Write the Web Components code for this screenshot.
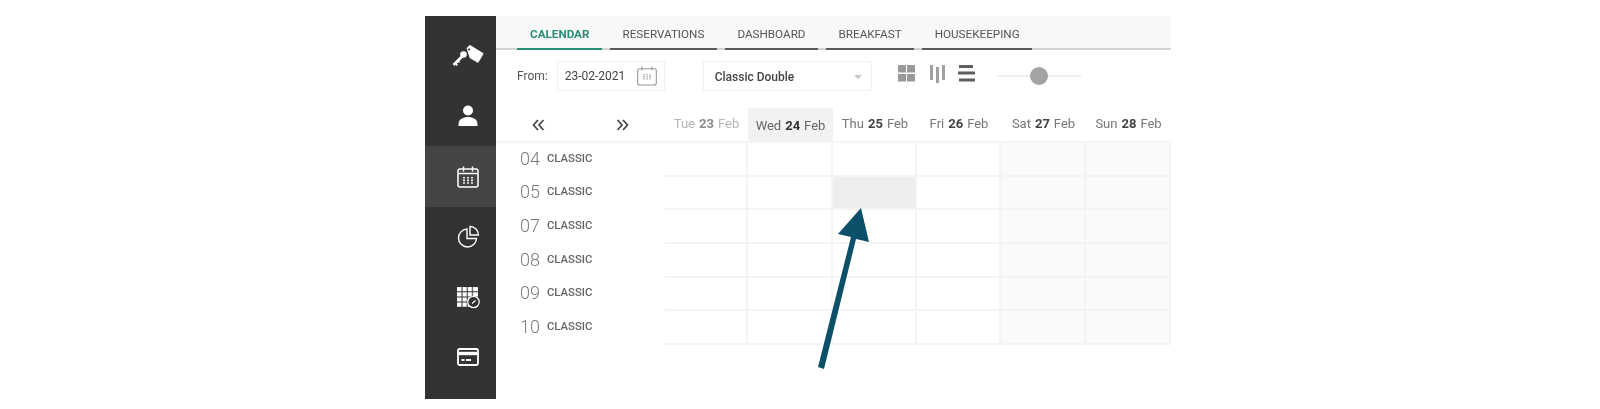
<!DOCTYPE html>
<html>
<head>
<meta charset="utf-8">
<title>Calendar</title>
<style>
  html, body { margin: 0; background: #fff; }
  body { font-family: Roboto, "Liberation Sans", sans-serif; }
</style>
</head>
<body>
<hotel-app>
  <side-rail slot="rail">
    <rail-item>
      <svg width="34" height="28" viewBox="0 0 34 28"><path d="M16.500 6.500L19 4l12.500 7.800-4.700 8-7.300-4.300z" fill="#fff" stroke="#fff" stroke-width="1.800" stroke-linejoin="round"/><circle cx="18" cy="7.500" r="1.100" fill="#333"/><path d="M2.500 23L11 14.500" stroke="#fff" stroke-width="2.800"/><circle cx="12.500" cy="12.500" r="3.300" fill="#fff"/><path d="M4.500 21.500l2 2M7 19l1.500 1.500" stroke="#fff" stroke-width="1.700"/></svg>
    </rail-item>
    <rail-item>
      <svg width="20" height="22" viewBox="0 0 20 22"><circle cx="10" cy="5.500" r="5" fill="#fff"/><path d="M0.500 21v-2c0-5 5-7 9.500-7s9.500 2 9.500 7v2z" fill="#fff"/></svg>
    </rail-item>
    <rail-item active>
      <svg width="22" height="24" viewBox="0 0 22 24" fill="none" stroke="#fff"><rect x="1" y="4" width="20" height="18" rx="2" stroke-width="1.500"/><path d="M1 8.500h20M6.500 1.500v5M15.500 1.500v5" stroke-width="1.400"/><path d="M7 12v7M11 12v7M15 12v7" stroke-width="1.800" stroke-dasharray="1.600 1"/></svg>
    </rail-item>
    <rail-item>
      <svg width="24" height="24" viewBox="0 0 24 24" fill="none" stroke="#fff" stroke-width="1.400"><path d="M11 4a9 9 0 1 0 9.500 9.500H11z"/><path d="M14 1.500a8.500 8.500 0 0 1 8.500 8.500H14z"/></svg>
    </rail-item>
    <rail-item>
      <svg width="24" height="24" viewBox="0 0 24 24"><path d="M1 2h21v4.200H1zM1 7.200h21v4.200H1zM1 12.400h21v4.200H1zM1 17.600h21v4.200H1z" fill="#fff"/><path d="M5.800 2v20M6.300 2v20M11 2v20M11.500 2v20M16.200 2v20M16.700 2v20" stroke="#333" stroke-width=".6"/><circle cx="17.500" cy="17" r="5.700" fill="#333" stroke="#fff" stroke-width="1.200"/><path d="M16 18.500l3.500-3" stroke="#fff" stroke-width="1.100"/></svg>
    </rail-item>
    <rail-item>
      <svg width="22" height="18" viewBox="0 0 22 18"><rect x="1" y="1" width="20" height="16" rx="1.500" fill="none" stroke="#fff" stroke-width="1.800"/><path d="M1 5.500h20" stroke="#fff" stroke-width="3.400"/><path d="M4.500 12h3M9 12h5" stroke="#fff" stroke-width="2"/></svg>
    </rail-item>
  </side-rail>

  <tab-bar slot="tabs">
    <tab-item active>CALENDAR</tab-item>
    <tab-item>RESERVATIONS</tab-item>
    <tab-item>DASHBOARD</tab-item>
    <tab-item>BREAKFAST</tab-item>
    <tab-item>HOUSEKEEPING</tab-item>
  </tab-bar>

  <tool-bar slot="tools">
    <date-field label="From:" value="23-02-2021"></date-field>
    <room-select value="Classic Double"></room-select>
    <view-switch></view-switch>
    <zoom-slider></zoom-slider>
  </tool-bar>

  <cal-grid slot="grid">
    <cal-head>
      <day-head dim name="Tue" num="23"></day-head>
      <day-head current name="Wed" num="24"></day-head>
      <day-head name="Thu" num="25"></day-head>
      <day-head name="Fri" num="26"></day-head>
      <day-head name="Sat" num="27"></day-head>
      <day-head name="Sun" num="28"></day-head>
    </cal-head>
    <room-row num="04" type="CLASSIC" h="34"></room-row>
    <room-row num="05" type="CLASSIC" h="33" selected="2"></room-row>
    <room-row num="07" type="CLASSIC" h="34"></room-row>
    <room-row num="08" type="CLASSIC" h="34"></room-row>
    <room-row num="09" type="CLASSIC" h="33"></room-row>
    <room-row num="10" type="CLASSIC" h="34"></room-row>
  </cal-grid>
</hotel-app>

<script>
const COLS = '169px 83px 85px 84px 84px 85px 85px';

class HotelApp extends HTMLElement {
  constructor() {
    super();
    this.attachShadow({ mode: 'open' }).innerHTML = `
    <style>
      :host { display: block; height: 409px; box-sizing: border-box; padding: 16px 0 10px 425px; position: relative; overflow: hidden; }
      .frame { display: flex; width: 746px; height: 383px; filter: blur(.35px); }
      .main { flex: 1; min-width: 0; display: flex; flex-direction: column; }
      svg { position: absolute; left: 810px; top: 200px; }
    </style>
    <div class="frame">
      <slot name="rail"></slot>
      <div class="main">
        <slot name="tabs"></slot>
        <slot name="tools"></slot>
        <slot name="grid"></slot>
      </div>
    </div>
    <svg width="70" height="175" viewBox="0 0 70 175">
      <path d="M51 8L28 34l13 3L8 167l6 2L46 39l13 3z" fill="#0b4f68"/>
    </svg>`;
  }
}

class SideRail extends HTMLElement {
  constructor() {
    super();
    this.attachShadow({ mode: 'open' }).innerHTML = `
    <style>
      :host { display: block; width: 71px; flex: none; background: #333; padding-top: 10px; box-sizing: border-box; }
    </style>
    <slot></slot>`;
  }
}

class RailItem extends HTMLElement {
  constructor() {
    super();
    this.attachShadow({ mode: 'open' }).innerHTML = `
    <style>
      :host { display: flex; align-items: center; justify-content: center; height: 60px; padding-left: 15px; box-sizing: border-box; }
      :host([active]) { background: #444; height: 61px; }
    </style>
    <slot></slot>`;
  }
}

class TabBar extends HTMLElement {
  constructor() {
    super();
    this.attachShadow({ mode: 'open' }).innerHTML = `
    <style>
      :host { display: flex; gap: 8px; height: 34px; box-sizing: border-box; padding-left: 21px; background: #f8f8f8; border-bottom: 2px solid #d4d4d4; }
    </style>
    <slot></slot>`;
  }
}

class TabItem extends HTMLElement {
  constructor() {
    super();
    this.attachShadow({ mode: 'open' }).innerHTML = `
    <style>
      :host { display: block; height: 34px; box-sizing: border-box; padding: 11px 12.500px 0; border-bottom: 2px solid #5a5a5a; font-size: 11.700px; line-height: 14px; font-weight: 400; color: #555; white-space: nowrap; }
      :host([active]) { color: #2b8c78; font-weight: 700; border-bottom-color: #2b8c78; padding-left: 13px; }
    </style>
    <slot></slot>`;
  }
}

class ToolBar extends HTMLElement {
  constructor() {
    super();
    this.attachShadow({ mode: 'open' }).innerHTML = `
    <style>
      :host { display: flex; align-items: flex-start; height: 58px; box-sizing: border-box; padding: 11px 0 0 21px; }
    </style>
    <slot></slot>`;
  }
}

class DateField extends HTMLElement {
  constructor() {
    super();
    this.attachShadow({ mode: 'open' }).innerHTML = `
    <style>
      :host { display: flex; align-items: center; gap: 9px; margin-right: 38px; font-size: 12px; color: #555; }
      .box { display: flex; align-items: center; justify-content: space-between; box-sizing: border-box; width: 108px; height: 30px; padding: 0 7px; border: 1.500px solid #f0f0f0; color: #444; font-size: 12px; }
    </style>
    <span>${this.getAttribute('label')}</span>
    <div class="box">
      <span>${this.getAttribute('value')}</span>
      <svg width="20" height="20" viewBox="0 0 20 20" fill="none" stroke="#999"><rect x=".7" y="2.700" width="18.600" height="16.300" rx="2" stroke-width="1.100"/><path d="M5 .5v4M15 .5v4" stroke-width="1.100"/><path d="M7 8v6M10 8v6M13 8v6" stroke-width="1.300" stroke-dasharray="1.300 .8"/></svg>
    </div>`;
  }
}

class RoomSelect extends HTMLElement {
  constructor() {
    super();
    this.attachShadow({ mode: 'open' }).innerHTML = `
    <style>
      :host { display: flex; align-items: center; justify-content: space-between; box-sizing: border-box; width: 169px; height: 30px; padding: 1px 9px 0 11px; margin-right: 26px; border: 1.500px solid #f0f0f0; font-size: 12px; font-weight: 500; color: #444; }
      i { width: 0; height: 0; border: 4px solid transparent; border-top-color: #c4c4c4; border-bottom: 0; }
    </style>
    <span>${this.getAttribute('value')}</span><i></i>`;
  }
}

class ViewSwitch extends HTMLElement {
  constructor() {
    super();
    this.attachShadow({ mode: 'open' }).innerHTML = `
    <style>
      :host { display: flex; gap: 15px; margin-top: 4px; margin-right: 22px; }
      svg { display: block; }
      svg:last-child { margin-left: -3px; }
    </style>
    <svg width="17" height="17" viewBox="0 0 17 17" fill="#999"><rect width="8" height="7.500" rx=".5"/><rect x="9" width="8" height="7.500" rx=".5"/><rect y="9" width="8" height="7.500" rx=".5"/><rect x="9" y="9" width="8" height="7.500" rx=".5"/></svg>
    <svg width="16" height="18" viewBox="0 0 16 18" fill="#a0a0a0"><rect width="3" height="15"/><rect x="6" y="2" width="3" height="16"/><rect x="12" width="3" height="15"/></svg>
    <svg width="17" height="17" viewBox="0 0 17 17" fill="#5f5f5f"><rect x="1" width="14" height="3"/><rect y="6.500" width="17" height="3"/><rect x="1" y="13.500" width="16" height="3"/></svg>`;
  }
}

class ZoomSlider extends HTMLElement {
  constructor() {
    super();
    this.attachShadow({ mode: 'open' }).innerHTML = `
    <style>
      :host { display: flex; align-items: center; width: 84px; height: 30px; padding-left: 33px; box-sizing: border-box; background: linear-gradient(#eee, #eee) center / 100% 2px no-repeat; }
      i { width: 18px; height: 18px; border-radius: 50%; background: #a3a3a3; }
    </style>
    <i></i>`;
  }
}

class CalGrid extends HTMLElement {
  constructor() {
    super();
    this.attachShadow({ mode: 'open' }).innerHTML = `
    <style>
      :host { display: block; }
    </style>
    <slot></slot>`;
  }
}

class CalHead extends HTMLElement {
  constructor() {
    super();
    this.attachShadow({ mode: 'open' }).innerHTML = `
    <style>
      :host { display: grid; grid-template-columns: ${COLS}; height: 35px; box-sizing: border-box; border-bottom: 2px solid #f5f5f5; }
      .nav { display: flex; justify-content: space-between; align-items: center; padding: 0 36px 0 36px; }
      svg { display: block; }
    </style>
    <div class="nav">
      <svg width="13" height="12" viewBox="0 0 13 12" fill="none" stroke="#444" stroke-width="1.700"><path d="M6 1L1.500 6 6 11M11.500 1L7 6l4.500 5"/></svg>
      <svg width="13" height="12" viewBox="0 0 13 12" fill="none" stroke="#444" stroke-width="1.700"><path d="M1.500 1L6 6l-4.500 5M7 1l4.500 5L7 11"/></svg>
    </div>
    <slot></slot>`;
  }
}

class DayHead extends HTMLElement {
  constructor() {
    super();
    this.attachShadow({ mode: 'open' }).innerHTML = `
    <style>
      :host { display: flex; align-items: center; justify-content: center; font-size: 13px; color: #777; white-space: nowrap; padding-bottom: 3px; box-sizing: border-box; }
      b { font-weight: 700; color: #444; margin: 0 4px; }
      :host([dim]) { color: #b5b5b5; }
      :host([dim]) b { color: #8c8c8c; }
      :host([current]) { background: #f2f2f2; color: #666; padding: 1px 0 0; }
      :host([current]) b { color: #333; }
    </style>
    ${this.getAttribute('name')}<b>${this.getAttribute('num')}</b>Feb`;
  }
}

class RoomRow extends HTMLElement {
  constructor() {
    super();
    const selected = this.getAttribute('selected');
    let cells = '';
    for (let i = 0; i < 6; i++) {
      const cls = i > 3 ? 'cell weekend' : i == selected ? 'cell selected' : 'cell';
      cells += `<div class="${cls}"></div>`;
    }
    this.attachShadow({ mode: 'open' }).innerHTML = `
    <style>
      :host { display: grid; grid-template-columns: ${COLS}; height: ${this.getAttribute('h')}px; }
      .room { display: flex; align-items: center; padding: 0 0 4px 24px; color: #7c7c7c; font-size: 18px; font-weight: 300; }
      .room span { margin-left: 7px; font-size: 11.300px; font-weight: 500; color: #666; }
      .cell { box-sizing: border-box; border-right: 2px solid #f4f4f4; border-bottom: 2px solid #f4f4f4; }
      .cell:nth-child(2) { border-left: 2px solid #f4f4f4; }
      .weekend { background: #fafafa; }
      .selected { background: #eee; }
    </style>
    <div class="room">${this.getAttribute('num')}<span>${this.getAttribute('type')}</span></div>
    ${cells}`;
  }
}

customElements.define('hotel-app', HotelApp);
customElements.define('side-rail', SideRail);
customElements.define('rail-item', RailItem);
customElements.define('tab-bar', TabBar);
customElements.define('tab-item', TabItem);
customElements.define('tool-bar', ToolBar);
customElements.define('date-field', DateField);
customElements.define('room-select', RoomSelect);
customElements.define('view-switch', ViewSwitch);
customElements.define('zoom-slider', ZoomSlider);
customElements.define('cal-grid', CalGrid);
customElements.define('cal-head', CalHead);
customElements.define('day-head', DayHead);
customElements.define('room-row', RoomRow);
</script>
</body>
</html>
